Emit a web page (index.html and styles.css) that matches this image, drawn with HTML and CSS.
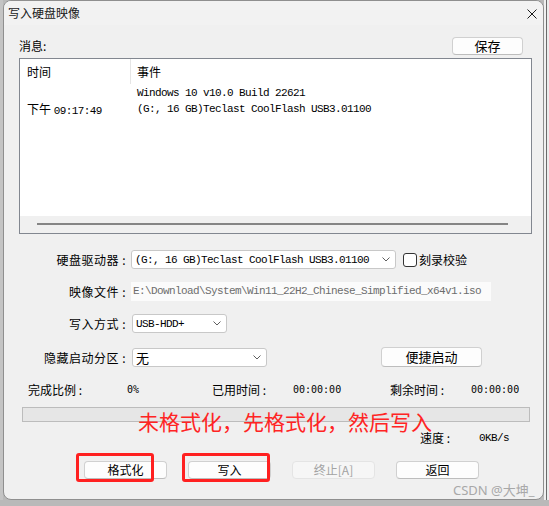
FILE: index.html
```html
<!DOCTYPE html>
<html lang="zh-CN">
<head>
<meta charset="utf-8">
<title>写入硬盘映像</title>
<link rel="stylesheet" href="styles.css">
</head>
<body>
<div class="desk">
  <div class="strip-left"></div>
  <div class="win">
    <div class="titlebar">
      <span class="title">写入硬盘映像</span>
      <svg class="close" width="10" height="10" viewBox="0 0 10 10"><path d="M0.5 0.5L9.5 9.5M9.5 0.5L0.5 9.5" stroke="#1a1a1a" stroke-width="1"/></svg>
    </div>
    <div class="content">
      <div class="msg-row">
        <span class="msg-label">消息:</span>
        <button class="btn save">保存</button>
      </div>
      <div class="list">
        <div class="list-head">
          <div class="c1 hc1">时间</div>
          <div class="c2">事件</div>
        </div>
        <div class="list-rows">
          <div class="lrow"><div class="c1"></div><div class="c2 mono">Windows 10 v10.0 Build 22621</div></div>
          <div class="lrow"><div class="c1">下午 <span class="mono">09:17:49</span></div><div class="c2 mono">(G:, 16 GB)Teclast CoolFlash USB3.01100</div></div>
        </div>
        <div class="hscroll"><div class="thumb"></div></div>
      </div>

      <div class="form">
        <div class="frow">
          <div class="flabel">硬盘驱动器 :</div>
          <div class="combo drive"><span class="mono">(G:, 16 GB)Teclast CoolFlash USB3.01100</span>
            <svg class="chev" width="8" height="5" viewBox="0 0 8 5"><path d="M0.5 0.5L4 4L7.5 0.5" fill="none" stroke="#5f5f5f" stroke-width="1"/></svg></div>
          <div class="check"></div>
          <span class="check-label">刻录校验</span>
        </div>
        <div class="frow gap13">
          <div class="flabel">映像文件 :</div>
          <div class="field mono">E:\Download\System\Win11_22H2_Chinese_Simplified_x64v1.iso</div>
        </div>
        <div class="frow gap13">
          <div class="flabel">写入方式 :</div>
          <div class="combo mode"><span class="mono">USB-HDD+</span>
            <svg class="chev" width="8" height="5" viewBox="0 0 8 5"><path d="M0.5 0.5L4 4L7.5 0.5" fill="none" stroke="#5f5f5f" stroke-width="1"/></svg></div>
        </div>
        <div class="frow gap14">
          <div class="flabel">隐藏启动分区 :</div>
          <div class="combo hidden-part"><span class="cjk13">无</span>
            <svg class="chev" width="8" height="5" viewBox="0 0 8 5"><path d="M0.5 0.5L4 4L7.5 0.5" fill="none" stroke="#5f5f5f" stroke-width="1"/></svg></div>
          <button class="btn quick">便捷启动</button>
        </div>
      </div>

      <div class="stats">
        <span>完成比例 :</span><span class="num">0%</span>
        <span>已用时间 :</span><span class="num">00:00:00</span>
        <span>剩余时间 :</span><span class="num">00:00:00</span>
      </div>
      <div class="progress"></div>
      <div class="speed">
        <span>速度 :</span><span class="mono">0KB/s</span>
      </div>
      <div class="actions">
        <button class="btn act">格式化</button>
        <button class="btn act">写入</button>
        <button class="btn act disabled">终止[A]</button>
        <button class="btn act">返回</button>
      </div>
    </div>

    <div class="note">未格式化，先格式化，然后写入</div>
    <div class="mark mark1"></div>
    <div class="mark mark2"></div>
    <div class="watermark">CSDN @大坤_</div>
  </div>
  <div class="strip-right"></div>
</div>
</body>
</html>
```

FILE: styles.css
```css
* { box-sizing: border-box; }
html, body { margin: 0; padding: 0; }
body {
  width: 549px;
  height: 506px;
  overflow: hidden;
  background: #b9b9b9;
  font-family: "Noto Sans CJK SC", "Noto Sans", sans-serif;
  font-size: 12px;
  color: #000;
}
.desk { display: flex; height: 500px; }
.strip-left { width: 3px; flex: none; background: #c4c4c4; }
.strip-right {
  flex: 1;
  background: linear-gradient(to right, #f0f0f0 2px, #6a6a6a 2px, #6a6a6a 3px, #ececec 3px);
}
.win {
  position: relative;
  flex: none;
  width: 541px;
  height: 500px;
  background: #f0f0f0;
  border: 1px solid #8f8f8f;
  border-radius: 8px;
  overflow: hidden;
}
.titlebar {
  height: 24px;
  display: flex;
  align-items: center;
  justify-content: space-between;
  padding-left: 4px;
  background: #f2f2f2;
}
.title { font-size: 12px; line-height: 24px; color: #1a1a1a; }
.close { margin-right: 6px; margin-top: 2px; }

.content { padding: 12px 11px 0 15px; }

.mono {
  font-family: "Liberation Mono", monospace;
  font-size: 11px;
  letter-spacing: -0.6px;
}
.cjk13 { font-size: 13px; }

.btn {
  font-family: "Noto Sans CJK SC", "Noto Sans", sans-serif;
  font-size: 12px;
  line-height: 16px;
  padding: 0;
  color: #000;
  background: #fdfdfd;
  border: 1px solid #d0d0d0;
  border-bottom-color: #bdbdbd;
  border-radius: 4px;
}

.msg-row {
  height: 18px;
  display: flex;
  align-items: center;
  justify-content: space-between;
  line-height: 18px;
}
.save { width: 71px; height: 18px; margin-right: 9px; font-size: 13px; }

.list {
  margin-top: 3px;
  height: 176px;
  border: 1px solid #828790;
  background: #fff;
  display: flex;
  flex-direction: column;
}
.list-head { height: 25px; display: flex; line-height: 25px; }
.c1 { width: 111px; flex: none; padding-left: 7px; white-space: nowrap; }
.hc1 { border-right: 1px solid #e5e5e5; }
.c2 { padding-left: 6px; white-space: nowrap; }
.list-rows { flex: 1; padding-top: 1px; }
.lrow { height: 16px; line-height: 16px; display: flex; }
.hscroll { height: 17px; background: #f0f0f0; padding: 7px 0 0 17px; }
.thumb { width: 471px; height: 2px; background: #858585; }

.form { margin-top: 16px; }
.frow { height: 19px; display: flex; align-items: center; }
.gap13 { margin-top: 13px; }
.gap14 { margin-top: 14px; height: 20px; }
.flabel {
  width: 107px;
  flex: none;
  text-align: right;
  letter-spacing: 0.5px;
  line-height: 19px;
  white-space: nowrap;
}
.combo {
  margin-left: 5px;
  height: 19px;
  background: #fff;
  border: 1px solid #c8c8c8;
  border-radius: 3px;
  display: flex;
  align-items: center;
  justify-content: space-between;
  padding-left: 3px;
  flex: none;
  white-space: nowrap;
}
.chev { margin-right: 5px; flex: none; }
.drive { width: 265px; }
.mode { width: 95px; margin-left: 6px; }
.hidden-part { width: 135px; margin-left: 6px; height: 19px; }
.check {
  margin-left: 7px;
  width: 14px;
  height: 14px;
  border: 1px solid #333;
  border-radius: 3px;
  background: #fff;
  flex: none;
}
.check-label { margin-left: 2px; font-size: 12px; }
.field {
  margin-left: 5px;
  width: 360px;
  height: 19px;
  line-height: 19px;
  background: #fbfbfb;
  color: #6d6d6d;
  padding-left: 2px;
  white-space: nowrap;
  overflow: hidden;
}
.quick { margin-left: 114px; width: 101px; height: 20px; font-size: 13px; }

.stats {
  margin-top: 15px;
  height: 16px;
  line-height: 16px;
  padding-left: 9px;
  display: grid;
  grid-template-columns: 99px 85px 81px 97px 81px 1fr;
  white-space: nowrap;
}
.num {
  font-family: "DejaVu Sans Mono", monospace;
  font-size: 10px;
}
.progress {
  margin-top: 9px;
  margin-left: 3px;
  width: 508px;
  height: 15px;
  background: #e6e6e6;
  border: 1px solid #bcbcbc;
}
.speed {
  margin-top: 9px;
  height: 14px;
  line-height: 14px;
  padding-left: 401px;
  display: grid;
  grid-template-columns: 59px auto;
}
.actions {
  margin-top: 16px;
  display: flex;
  gap: 21px;
  padding-left: 65px;
}
.act { width: 83px; height: 18px; }
.disabled {
  color: #a3a3a3;
  background: #f6f6f6;
  border-color: #e4e4e4;
}

.note {
  position: absolute;
  left: 134px;
  top: 410px;
  font-size: 21px;
  line-height: 20px;
  color: #ff2424;
  white-space: nowrap;
}
.mark {
  position: absolute;
  top: 452px;
  height: 29px;
  border: 3px solid #ff2020;
  border-radius: 3px;
}
.mark1 { left: 72px; width: 78px; }
.mark2 { left: 178px; width: 88px; }
.watermark {
  position: absolute;
  left: 449px;
  top: 481px;
  font-family: "Noto Sans", "Noto Sans CJK SC", sans-serif;
  font-size: 13px;
  line-height: 17px;
  color: #a8a8a8;
  white-space: nowrap;
}
```
